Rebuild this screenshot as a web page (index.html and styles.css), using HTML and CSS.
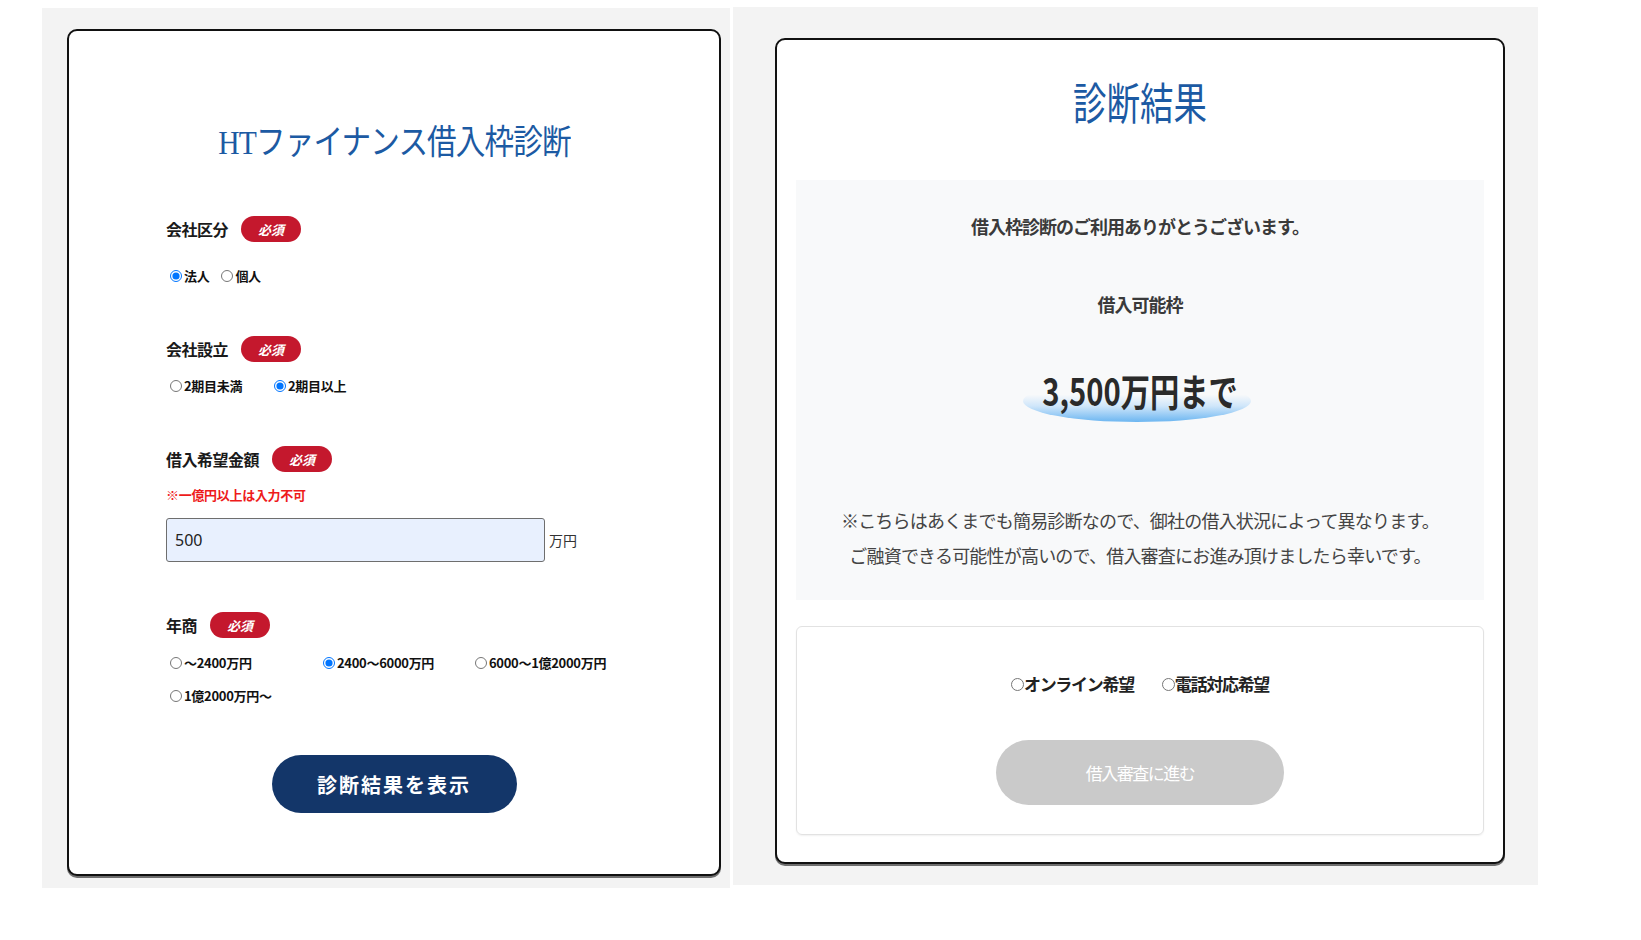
FILE: index.html
```html
<!DOCTYPE html>
<html lang="ja">
<head>
<meta charset="utf-8">
<title>HTファイナンス借入枠診断</title>
<link rel="stylesheet" href="styles.css">
</head>
<body>
<div class="page">
  <section class="panel panel-left">
    <div class="card card-form">
      <div class="form-title-wrap"><h1 class="form-title">HTファイナンス借入枠診断</h1></div>

      <div class="field-label field-first"><span class="label-text">会社区分</span><span class="badge">必須</span></div>
      <div class="radio-row row-kubun">
        <label class="radio-item"><input type="radio" name="kubun" checked><span>法人</span></label>
        <label class="radio-item"><input type="radio" name="kubun"><span>個人</span></label>
      </div>

      <div class="field-label"><span class="label-text">会社設立</span><span class="badge">必須</span></div>
      <div class="radio-row row-setsuritsu">
        <label class="radio-item"><input type="radio" name="setsu"><span>2期目未満</span></label>
        <label class="radio-item"><input type="radio" name="setsu" checked><span>2期目以上</span></label>
      </div>

      <div class="field-label"><span class="label-text">借入希望金額</span><span class="badge">必須</span></div>
      <p class="note-red">※一億円以上は入力不可</p>
      <div class="amount-row">
        <input class="amount-input" type="text" value="500">
        <span class="unit">万円</span>
      </div>

      <div class="field-label field-nensho"><span class="label-text">年商</span><span class="badge">必須</span></div>
      <div class="radio-grid">
        <label class="radio-item"><input type="radio" name="nensho"><span>～2400万円</span></label>
        <label class="radio-item"><input type="radio" name="nensho" checked><span>2400～6000万円</span></label>
        <label class="radio-item"><input type="radio" name="nensho"><span>6000～1億2000万円</span></label>
        <label class="radio-item"><input type="radio" name="nensho"><span>1億2000万円～</span></label>
      </div>

      <div class="btn-wrap"><button class="btn-primary" type="button">診断結果を表示</button></div>
    </div>
  </section>

  <section class="panel panel-right">
    <div class="card card-result">
      <div class="result-title-wrap"><h2 class="result-title">診断結果</h2></div>

      <div class="result-box">
        <p class="thanks">借入枠診断のご利用ありがとうございます。</p>
        <p class="limit-label">借入可能枠</p>
        <div class="amount-display">
          <span class="glow"></span>
          <span class="amount-text">3,500万円まで</span>
        </div>
        <p class="disclaimer">※こちらはあくまでも簡易診断なので、御社の借入状況によって異なります。<br>ご融資できる可能性が高いので、借入審査にお進み頂けましたら幸いです。</p>
      </div>

      <div class="apply-box">
        <div class="contact-row">
          <label class="contact-item"><input type="radio" name="contact"><span>オンライン希望</span></label>
          <label class="contact-item"><input type="radio" name="contact"><span>電話対応希望</span></label>
        </div>
        <div class="btn-wrap2"><button class="btn-disabled" type="button">借入審査に進む</button></div>
      </div>
    </div>
  </section>
</div>
</body>
</html>
```

FILE: styles.css
```css
html, body {
  margin: 0;
  padding: 0;
  background: #ffffff;
}

body {
  font-family: "Noto Sans CJK JP", "Noto Sans", sans-serif;
  color: #222;
}

.page {
  display: flex;
  align-items: flex-start;
  gap: 3px;
  padding-left: 42px;
}

.panel {
  background: #f3f3f3;
  box-sizing: border-box;
}

.panel-left {
  margin-top: 8px;
  width: 688px;
  height: 880px;
  padding: 21px 9px 12px 25px;
}

.panel-right {
  margin-top: 7px;
  width: 805px;
  height: 878px;
  padding: 31px 33px 21px 42px;
}

.card {
  background: #fff;
  border: 2px solid #111;
  border-radius: 10px;
  box-sizing: border-box;
  box-shadow: 0 2px 0 rgba(0, 0, 0, 0.55);
}

/* ---------- left form card ---------- */
.card-form {
  width: 654px;
  height: 847px;
  padding: 92px 0 0 97px;
}

.form-title-wrap {
  margin-left: -97px;
  display: flex;
  justify-content: center;
  height: 40px;
}

.form-title {
  margin: 0;
  font-family: "Liberation Serif", "Noto Sans CJK JP", serif;
  font-weight: 400;
  font-size: 34px;
  line-height: 40px;
  color: #1c5aa3;
  letter-spacing: -1px;
  white-space: nowrap;
  transform: scaleX(0.87);
}

.field-label {
  display: flex;
  align-items: center;
  height: 26px;
  margin-top: 51px;
}

.field-first {
  margin-top: 53px;
}

.label-text {
  font-size: 16px;
  font-weight: 700;
  color: #1a1a1a;
  letter-spacing: -0.5px;
}

.badge {
  display: inline-flex;
  align-items: center;
  justify-content: center;
  width: 60px;
  height: 26px;
  margin-left: 13px;
  border-radius: 13px;
  background: #c4182d;
  color: #fff;
  font-family: "Liberation Serif", "Noto Sans CJK JP", serif;
  font-size: 13px;
  font-weight: 700;
  font-style: italic;
}

.radio-row,
.radio-grid {
  display: flex;
  align-items: center;
  height: 20px;
}

.row-kubun {
  margin-top: 23px;
  gap: 8px;
}

.row-setsuritsu {
  margin-top: 13px;
  gap: 0;
}

.row-setsuritsu .radio-item {
  width: 104px;
}

.radio-item {
  display: inline-flex;
  align-items: center;
  font-size: 13px;
  font-weight: 700;
  color: #111;
  letter-spacing: -0.3px;
}

.radio-item input {
  width: 12px;
  height: 12px;
  margin: 2px 2px 0 4px;
}

.note-red {
  margin: 13px 0 0;
  height: 20px;
  line-height: 20px;
  font-size: 13px;
  font-weight: 700;
  color: #ee1b1b;
  letter-spacing: -0.3px;
}

.amount-row {
  display: flex;
  align-items: center;
  margin-top: 13px;
}

.amount-input {
  width: 379px;
  height: 44px;
  box-sizing: border-box;
  border: 1.5px solid #6e6e6e;
  border-radius: 3px;
  background: #e8f0fe;
  padding: 0 8px;
  font-family: "Noto Sans", "Noto Sans CJK JP", sans-serif;
  font-size: 16px;
  color: #222;
  margin: 0;
}

.unit {
  margin-left: 4px;
  font-size: 14px;
  color: #333;
}

.field-nensho {
  margin-top: 50px;
}

.radio-grid {
  display: grid;
  grid-template-columns: 153px 152px 160px;
  grid-auto-rows: 20px;
  row-gap: 13px;
  height: auto;
  margin-top: 14px;
}

.btn-wrap {
  margin: 50px 0 0 -97px;
  display: flex;
  justify-content: center;
}

.btn-primary {
  width: 245px;
  height: 58px;
  border: none;
  border-radius: 29px;
  background: #133669;
  color: #fff;
  font-family: "Noto Sans CJK JP", sans-serif;
  font-size: 20px;
  font-weight: 700;
  letter-spacing: 2px;
  padding: 0;
}

/* ---------- right result card ---------- */
.card-result {
  width: 730px;
  height: 826px;
  padding: 41px 19px 0;
}

.result-title-wrap {
  display: flex;
  justify-content: center;
  height: 50px;
}

.result-title {
  margin: 0;
  font-family: "Liberation Serif", "Noto Sans CJK JP", serif;
  font-weight: 400;
  font-size: 44px;
  line-height: 50px;
  color: #1c5aa3;
  transform: scaleX(0.76);
}

.result-box {
  margin-top: 49px;
  background: #f8f9fa;
  padding: 31px 0 27px;
  text-align: center;
  color: #3a3a3a;
}

.thanks,
.limit-label {
  margin: 0;
  font-size: 18px;
  line-height: 30px;
  font-weight: 700;
  letter-spacing: -1px;
}

.limit-label {
  margin-top: 48px;
}

.amount-display {
  position: relative;
  height: 44px;
  margin-top: 49px;
  display: flex;
  justify-content: center;
}

.glow {
  position: absolute;
  left: 50%;
  top: 12px;
  width: 228px;
  height: 42px;
  margin-left: -117px;
  border-radius: 50%;
  background: linear-gradient(to bottom, rgba(248, 249, 250, 0) 35%, #cfe6fa 62%, #6cb6f1 100%);
}

.amount-text {
  position: relative;
  display: inline-block;
  font-size: 38px;
  line-height: 44px;
  font-weight: 700;
  color: #2a2a2a;
  transform: scaleX(0.77);
}

.disclaimer {
  margin: 91px 0 0;
  font-size: 18px;
  line-height: 35px;
  font-weight: 400;
  color: #444;
  letter-spacing: -0.8px;
}

.apply-box {
  margin-top: 26px;
  height: 209px;
  box-sizing: border-box;
  border: 1px solid #e2e2e2;
  border-radius: 6px;
  box-shadow: 0 1px 2px rgba(0, 0, 0, 0.06);
  padding-top: 41px;
}

.contact-row {
  display: flex;
  justify-content: center;
  gap: 28px;
  height: 30px;
  align-items: center;
}

.contact-item {
  display: inline-flex;
  align-items: center;
  font-size: 17px;
  font-weight: 700;
  color: #222;
  letter-spacing: -1.3px;
}

.contact-item input {
  width: 13px;
  height: 15px;
  margin: 3px 0 0 0;
}

.btn-wrap2 {
  margin-top: 42px;
  display: flex;
  justify-content: center;
}

.btn-disabled {
  width: 288px;
  height: 65px;
  border: none;
  border-radius: 33px;
  background: #cacaca;
  color: #fff;
  font-family: "Noto Sans CJK JP", sans-serif;
  font-size: 17px;
  letter-spacing: -1.5px;
  padding: 0;
}
```
